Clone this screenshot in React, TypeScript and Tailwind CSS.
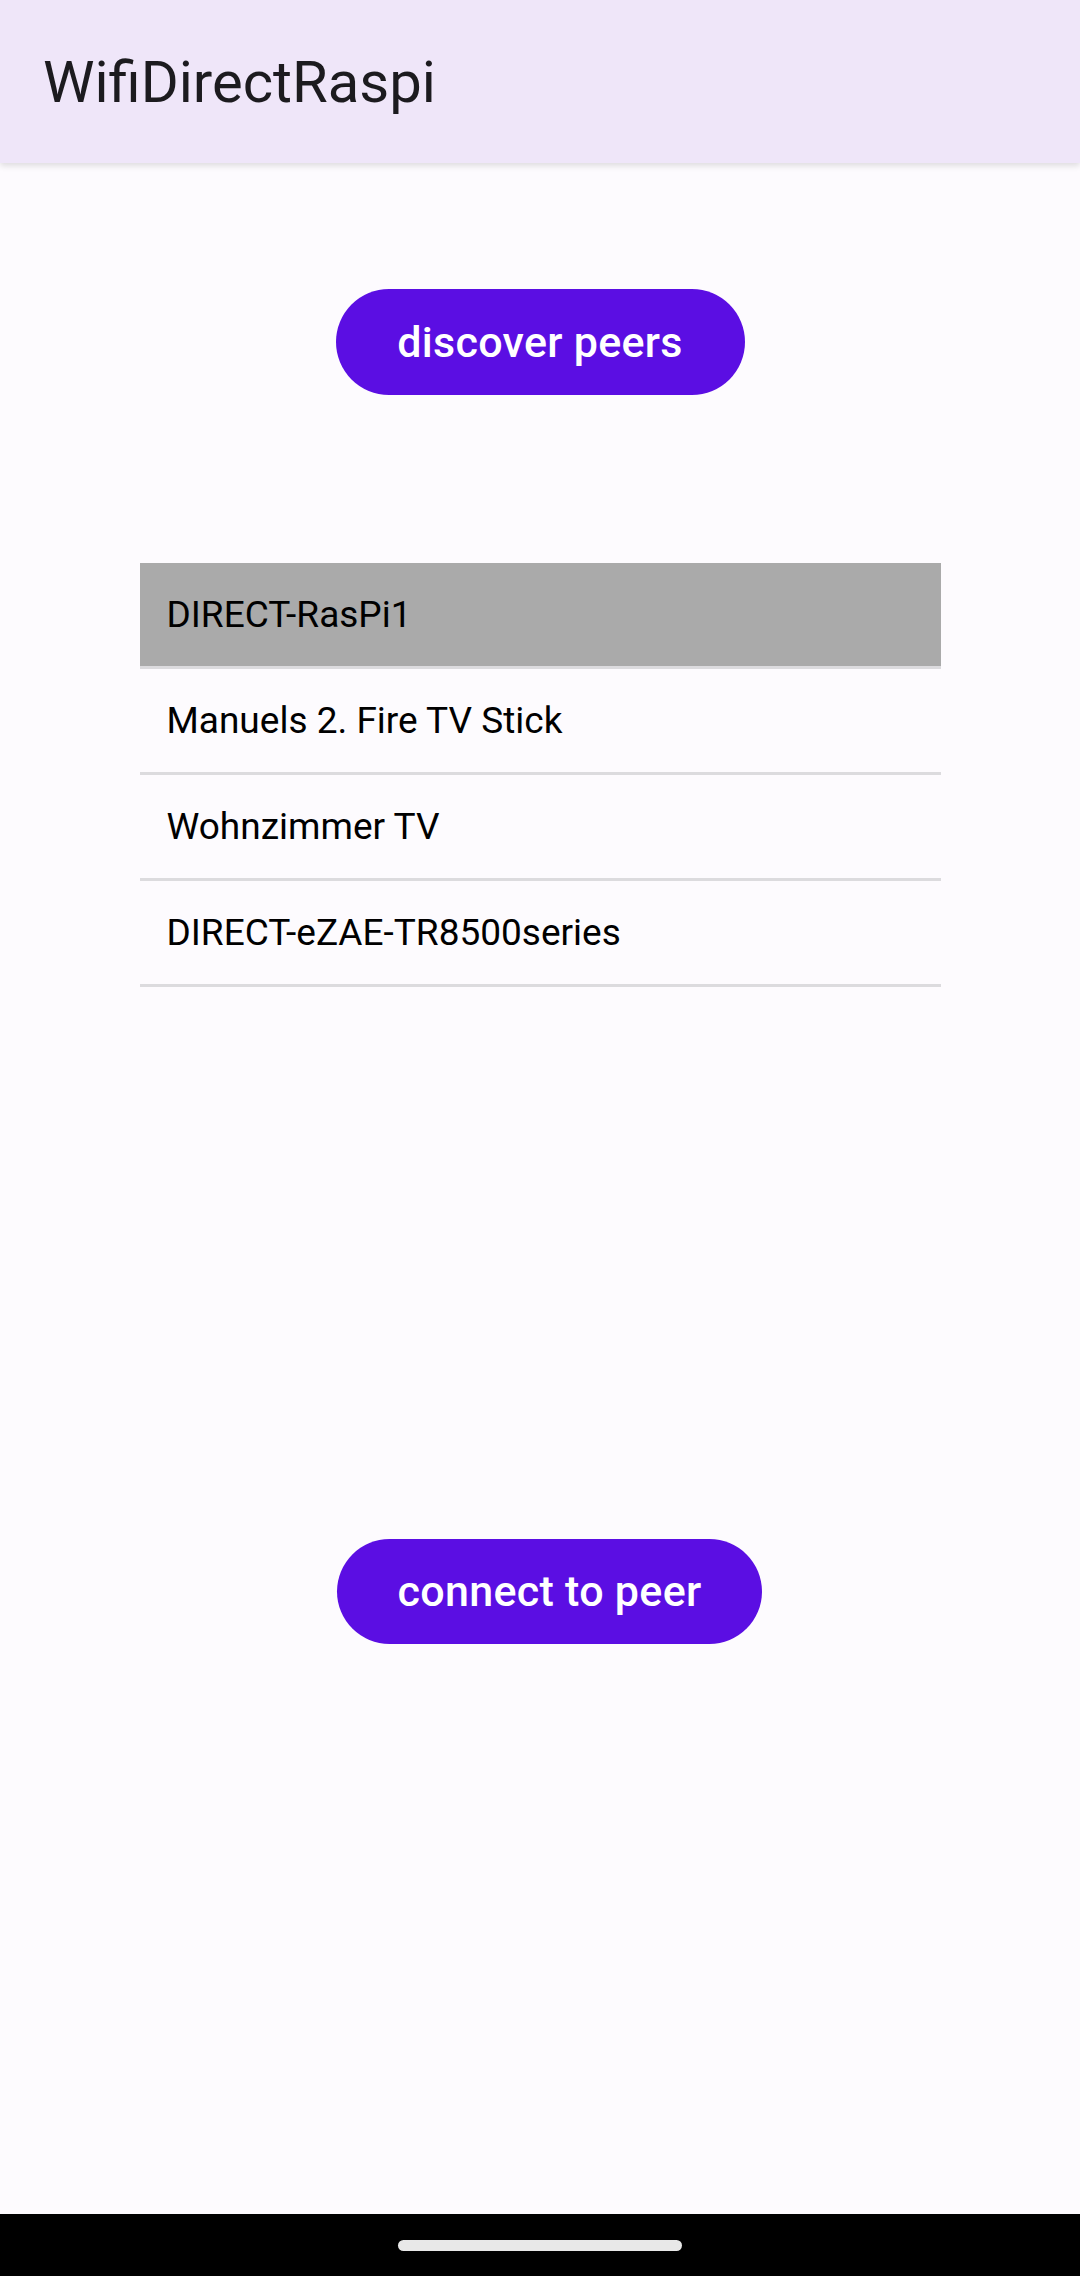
const PEERS = [
  "DIRECT-RasPi1",
  "Manuels 2. Fire TV Stick",
  "Wohnzimmer TV",
  "DIRECT-eZAE-TR8500series",
];

export default function App() {
  const selected = 0;

  return (
    <div className="flex h-[2276px] w-[1080px] flex-col bg-[#fdfbfe] font-['Roboto',sans-serif]">
      <header className="relative z-10 flex h-[163px] shrink-0 items-center bg-[#efe6f9] pl-[43px] shadow-[0_3px_6px_rgba(0,0,0,0.12)]">
        <h1 className="text-[58px] font-normal leading-none text-[#1c1b1f]">
          WifiDirectRaspi
        </h1>
      </header>

      <main className="flex flex-1 flex-col">
        <div className="flex justify-center pt-[126px]">
          <button
            type="button"
            className="flex h-[106px] w-[409px] items-center justify-center rounded-full bg-[#5b0ee3] text-[43px] font-medium leading-none tracking-[0.3px] text-white"
          >
            discover peers
          </button>
        </div>

        <ul className="mx-auto mt-[168px] w-[801px]">
          {PEERS.map((name, i) => (
            <li
              key={name}
              className={
                i === selected
                  ? "flex h-[106px] items-center border-b-[3px] border-[#dcdbde] bg-[#aaaaaa] pl-[27px] text-[37px] leading-none text-black"
                  : "flex h-[106px] items-center border-b-[3px] border-[#dcdbde] pl-[27px] text-[37px] leading-none text-black"
              }
            >
              {name}
            </li>
          ))}
        </ul>

        <div className="pl-[337px] pt-[552px]">
          <button
            type="button"
            className="flex h-[105px] w-[425px] items-center justify-center rounded-full bg-[#5b0ee3] text-[43px] font-medium leading-none tracking-[0.3px] text-white"
          >
            connect to peer
          </button>
        </div>
      </main>

      <div className="flex h-[62px] shrink-0 justify-center bg-black pt-[26px]">
        <div className="h-[11px] w-[284px] rounded-full bg-[#e8e8e8]" />
      </div>
    </div>
  );
}
